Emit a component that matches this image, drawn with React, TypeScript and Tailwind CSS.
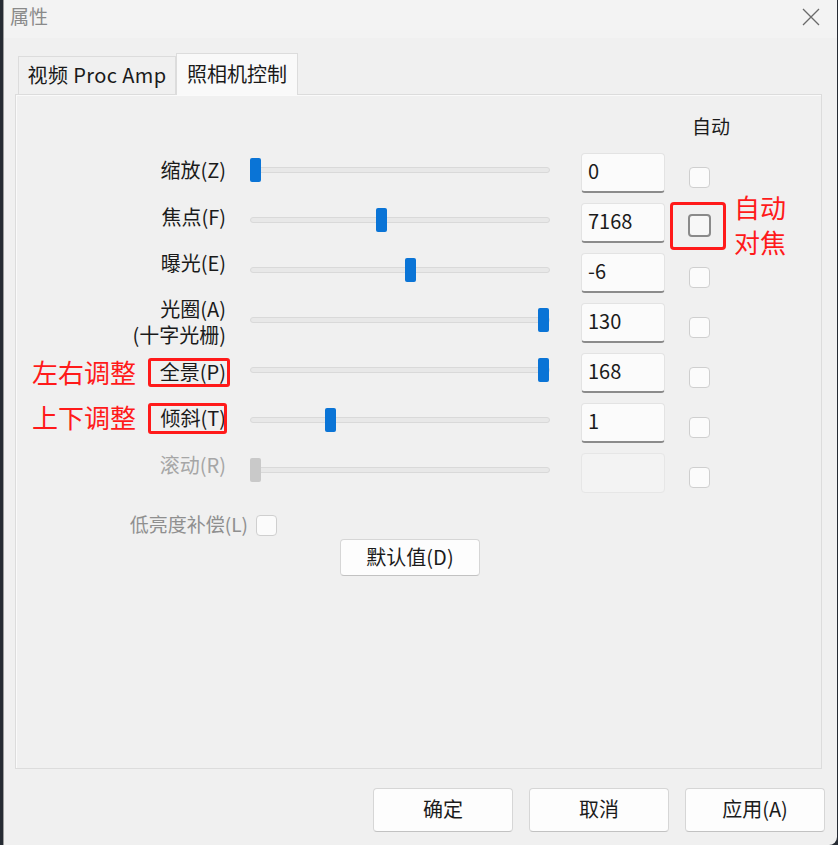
import React from "react";

// Camera properties dialog (照相机控制 tab) with red annotation overlays

type Row = {
  label: string[];
  value: string;
  pos: number;
  shift: string;
  disabled?: boolean;
  focused?: boolean;
};

const rows: Row[] = [
  { label: ["缩放(Z)"], value: "0", pos: 0, shift: "-mt-[2px]" },
  { label: ["焦点(F)"], value: "7168", pos: 126, shift: "-mt-[5px]", focused: true },
  { label: ["曝光(E)"], value: "-6", pos: 155, shift: "-mt-[9px]" },
  { label: ["光圈(A)", "(十字光栅)"], value: "130", pos: 288, shift: "mt-0" },
  { label: ["全景(P)"], value: "168", pos: 288, shift: "mt-0" },
  { label: ["倾斜(T)"], value: "1", pos: 75, shift: "-mt-[4px]" },
  { label: ["滚动(R)"], value: "", pos: 0, shift: "-mt-[7px]", disabled: true },
];

function Slider({ pos, disabled }: { pos: number; disabled?: boolean }) {
  return (
    <div className="relative ml-[24px] h-[40px] w-[300px]">
      <div className="absolute left-0 right-0 top-[14px] h-[6px] rounded-[3px] border border-[#d9d9d9] bg-[#e8e8e8]" />
      <div
        className={
          "absolute top-[5px] h-[24px] w-[11px] rounded-[2px] " +
          (disabled ? "bg-[#c9c9c9]" : "bg-[#0a74d6]")
        }
        style={{ left: pos }}
      />
    </div>
  );
}

function CheckBox({ focused, className = "" }: { focused?: boolean; className?: string }) {
  if (focused) {
    return (
      <div className={"h-[23px] w-[23px] rounded-[4px] border-2 border-[#8a8a8a] bg-[#f7f7f7] " + className} />
    );
  }
  return <div className={"h-[21px] w-[21px] rounded-[4px] border border-[#cfcfcf] bg-[#fbfbfb] " + className} />;
}

function PropRow({ row }: { row: Row }) {
  return (
    <div className="flex h-[40px] items-start">
      <div
        className={
          "flex h-[40px] w-[210px] flex-col items-end justify-center pb-[3px] text-[20px] leading-[26px] " +
          row.shift +
          (row.disabled ? " text-[#a6a6a6]" : " text-[#1a1a1a]")
        }
      >
        {row.label.map((l) => (
          <span key={l}>{l}</span>
        ))}
      </div>
      <Slider pos={row.pos} disabled={row.disabled} />
      <div
        className={
          "ml-[31px] flex h-[40px] w-[84px] items-center rounded-[4px] border pb-[3px] pl-[6px] text-[20px] text-[#1b1b1b] " +
          (row.disabled
            ? "border-[#e6e6e6] bg-[#f3f3f3]"
            : "border-[#e3e3e3] border-b-2 border-b-[#8b8b8b] bg-[#fbfbfb]")
        }
      >
        {row.value}
      </div>
      {row.focused ? (
        <CheckBox focused className="ml-[23px] mt-[11px]" />
      ) : (
        <CheckBox className="ml-[24px] mt-[14px]" />
      )}
    </div>
  );
}

function Button({ label, className = "" }: { label: string; className?: string }) {
  return (
    <div
      className={
        "flex items-center justify-center rounded-[4px] border border-[#d6d6d6] border-b-[#c2c2c2] bg-[#fdfdfd] text-[20px] text-[#1b1b1b] " +
        className
      }
    >
      {label}
    </div>
  );
}

export default function App() {
  return (
    <div
      className="relative flex h-[845px] w-[838px] overflow-hidden bg-[#262b33]"
      style={{ fontFamily: '"Noto Sans CJK SC", "Noto Sans", sans-serif' }}
    >
      <div className="ml-[3px] flex h-[845px] w-[834px] flex-col rounded-r-[8px] border-l border-[#9c9c9c] bg-[#f0f0f0]">
        {/* title bar */}
        <div className="flex h-[38px] items-center justify-between bg-[#f3f3f3] pl-[6px] pr-[17px]">
          <span className="pb-[6px] text-[19px] text-[#8a8a8a]">属性</span>
          <svg width="18" height="18" viewBox="0 0 18 18" className="mb-[5px]">
            <path d="M1 1 L17 17 M17 1 L1 17" stroke="#6a6a6a" strokeWidth="1.3" fill="none" />
          </svg>
        </div>

        {/* tabs */}
        <div className="mt-[15px] flex h-[41px] items-end pl-[14px]">
          <div className="flex h-[38px] w-[158px] items-center justify-center border border-b-0 border-[#dcdcdc] bg-[#f0f0f0] pb-[1px] text-[20px] tracking-[0.4px] text-[#1a1a1a]">
            视频 Proc Amp
          </div>
          <div className="relative z-10 -mb-[1px] flex h-[42px] w-[122px] items-center justify-center border border-b-0 border-[#dcdcdc] bg-[#f9f9f9] pb-[2px] text-[20px] text-[#1a1a1a]">
            照相机控制
          </div>
        </div>

        {/* panel */}
        <div className="ml-[11px] flex h-[675px] w-[807px] flex-col border border-[#dcdcdc] bg-[#f0f0f0] shadow-[inset_1px_1px_0_#fafafa]">
          <div className="mt-[18px] h-[26px] pl-[676px] text-[19px] leading-[26px] text-[#1a1a1a]">自动</div>
          <div className="mt-[14px] flex flex-col gap-[10px]">
            {rows.map((r) => (
              <PropRow key={r.label[0]} row={r} />
            ))}
          </div>
          <div className="mt-[22px] flex h-[21px] items-center">
            <div className="flex w-[232px] justify-end pb-[3px] text-[19px] text-[#8f8f8f]">低亮度补偿(L)</div>
            <CheckBox className="ml-[8px]" />
          </div>
          <Button label="默认值(D)" className="ml-[324px] mt-[3px] h-[37px] w-[140px] pb-[2px]" />
        </div>

        {/* footer buttons */}
        <div className="mt-[19px] flex justify-end gap-[16px] pr-[12px]">
          <Button label="确定" className="h-[44px] w-[140px] pb-[2px]" />
          <Button label="取消" className="h-[44px] w-[140px] pb-[2px]" />
          <Button label="应用(A)" className="h-[44px] w-[140px] pb-[2px]" />
        </div>
      </div>

      {/* red annotations */}
      <div className="absolute left-[670px] top-[202px] h-[48px] w-[56px] rounded-[4px] border-[3px] border-[#ff1a1a]" />
      <div className="absolute left-[734px] top-[189px] text-[26px] leading-[35px] text-[#ff1a1a]">
        <div>自动</div>
        <div>对焦</div>
      </div>
      <div className="absolute left-[148px] top-[358px] h-[29px] w-[82px] rounded-[3px] border-[3px] border-[#ff1a1a]" />
      <div className="absolute left-[148px] top-[403px] h-[31px] w-[79px] rounded-[3px] border-[3px] border-[#ff1a1a]" />
      <div className="absolute left-[32px] top-[354px] text-[26px] leading-[35px] text-[#ff1a1a]">左右调整</div>
      <div className="absolute left-[32px] top-[399px] text-[26px] leading-[35px] text-[#ff1a1a]">上下调整</div>
    </div>
  );
}
